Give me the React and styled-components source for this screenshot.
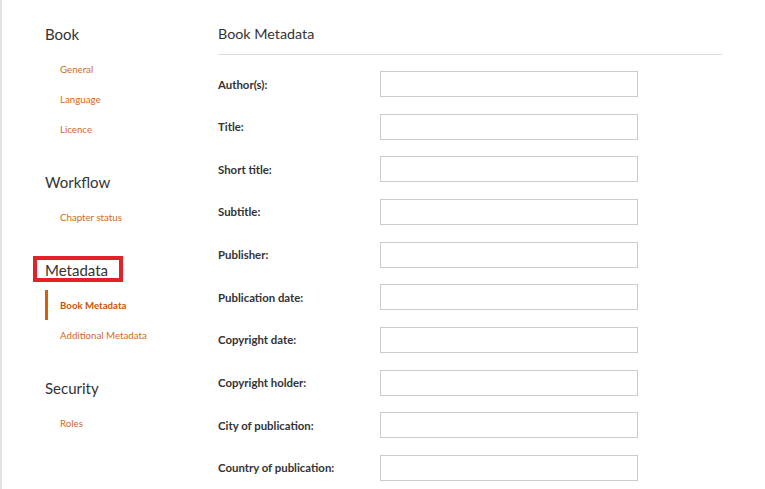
import React from "react";
import styled, { createGlobalStyle } from "styled-components";

const GlobalStyle = createGlobalStyle`
  html, body {
    margin: 0;
    padding: 0;
    background: #ffffff;
  }
  body {
    font-family: Lato, "Open Sans", sans-serif;
    color: #333333;
  }
`;

const Page = styled.div`
  display: flex;
  min-height: 100vh;
  border-left: 2px solid #e3e3e3;
  box-sizing: border-box;
`;

const Sidebar = styled.nav`
  width: 216px;
  flex-shrink: 0;
  padding: 25px 0 0 43px;
  box-sizing: border-box;
`;

const Section = styled.div`
  margin-bottom: 29px;
`;

const Heading = styled.h3`
  position: relative;
  margin: 0 0 11px 0;
  font-size: 15px;
  line-height: 18px;
  font-weight: 400;
  color: #333333;

  ${(p) =>
    p.$highlighted &&
    `
    &::after {
      content: "";
      position: absolute;
      top: -5px;
      left: -12px;
      width: 90px;
      height: 26px;
      box-sizing: border-box;
      border: 4px solid #e5202b;
    }
  `}
`;

const LinkList = styled.ul`
  list-style: none;
  margin: 0;
  padding: 0;
`;

const NavLink = styled.li`
  height: 30px;
  line-height: 30px;
  font-size: 9.7px;
  padding-left: ${(p) => (p.$active ? "12px" : "15px")};
  border-left: ${(p) => (p.$active ? "3px solid #d4600f" : "none")};
  color: ${(p) => (p.$active ? "#c9560c" : "#cf6a22")};
  font-weight: ${(p) => (p.$active ? 700 : 400)};
  cursor: pointer;
`;

const Main = styled.main`
  width: 504px;
  padding-top: 25px;
`;

const Title = styled.h2`
  margin: 0;
  font-size: 14.3px;
  line-height: 18px;
  font-weight: 400;
  color: #333333;
  padding-bottom: 11px;
  border-bottom: 1px solid #dddddd;
`;

const Form = styled.form`
  display: grid;
  grid-template-columns: 162px 258px;
  grid-auto-rows: 26px;
  row-gap: 16.67px;
  align-items: center;
  padding-top: 16px;
`;

const Label = styled.label`
  font-size: 11.4px;
  font-weight: 700;
  color: #333333;
`;

const Input = styled.input`
  height: 26px;
  width: 258px;
  box-sizing: border-box;
  border: 1px solid #cccccc;
  border-radius: 0;
  padding: 0 6px;
  font-family: inherit;
  font-size: 12px;
  outline: none;
`;

const nav = [
  { title: "Book", links: ["General", "Language", "Licence"] },
  { title: "Workflow", links: ["Chapter status"] },
  {
    title: "Metadata",
    highlighted: true,
    links: ["Book Metadata", "Additional Metadata"],
    active: "Book Metadata",
  },
  { title: "Security", links: ["Roles"] },
];

const fields = [
  "Author(s):",
  "Title:",
  "Short title:",
  "Subtitle:",
  "Publisher:",
  "Publication date:",
  "Copyright date:",
  "Copyright holder:",
  "City of publication:",
  "Country of publication:",
];

export default function App() {
  return (
    <>
      <GlobalStyle />
      <Page>
        <Sidebar>
          {nav.map((section) => (
            <Section key={section.title}>
              <Heading $highlighted={section.highlighted}>{section.title}</Heading>
              <LinkList>
                {section.links.map((link) => (
                  <NavLink key={link} $active={section.active === link}>
                    {link}
                  </NavLink>
                ))}
              </LinkList>
            </Section>
          ))}
        </Sidebar>
        <Main>
          <Title>Book Metadata</Title>
          <Form onSubmit={(e) => e.preventDefault()}>
            {fields.map((f, i) => (
              <React.Fragment key={f}>
                <Label htmlFor={"f" + i}>{f}</Label>
                <Input id={"f" + i} type="text" />
              </React.Fragment>
            ))}
          </Form>
        </Main>
      </Page>
    </>
  );
}
